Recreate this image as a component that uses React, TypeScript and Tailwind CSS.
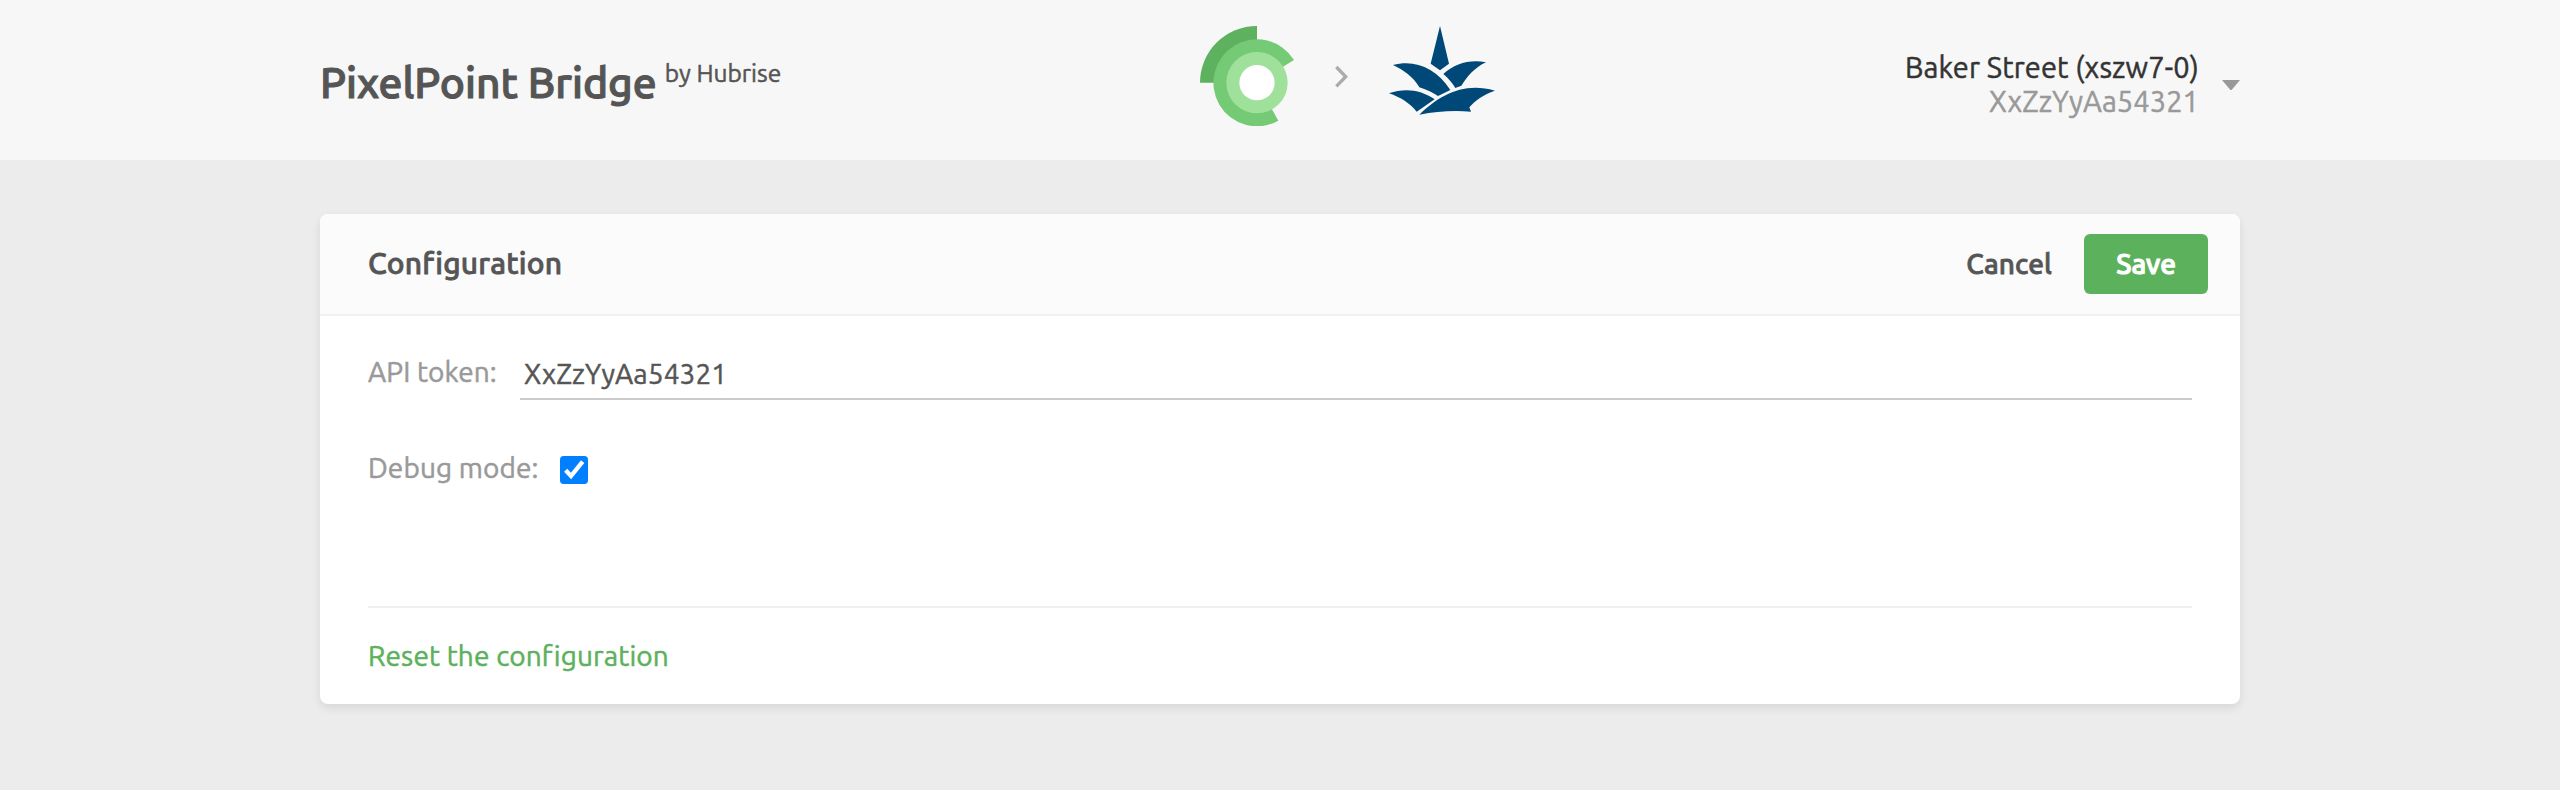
function HubLogo() {
  return (
    <svg className="h-[100px] w-[94px]" viewBox="60 48 282 300" aria-hidden="true">
      <path d="M231 218H60A171 170 0 0 1 231 48Z" fill="#5eb15e" />
      <path d="M231 218L295 332A130.5 130.5 0 1 1 342 150Z" fill="#75ca75" />
      <circle cx="231" cy="218" r="92" fill="#9fe19b" />
      <circle cx="231" cy="218" r="53" fill="#fff" />
    </svg>
  );
}

function PineappleLogo() {
  return (
    <svg className="h-[91px] w-[108px]" viewBox="624 45 324 273" fill="#004877" aria-hidden="true">
      <path d="M780 48L807 161L780 181L752 161Z" />
      <path d="M639 165C703 148 768 172 811 240L774 258C758 248 742 240 718 232C700 200 670 180 639 165Z" />
      <path d="M790 192C825 160 870 148 918 157C880 175 862 200 844 227L826 234C817 219 805 205 790 192Z" />
      <path d="M627 250C675 232 725 240 764 268L710 305C690 280 662 262 627 250Z" />
      <path d="M718 314C780 255 850 215 945 242C910 253 885 272 868 292L873 305C820 301 770 304 718 314Z" />
    </svg>
  );
}

function Header() {
  return (
    <header className="h-40 bg-[#f7f7f7]">
      <div className="mx-auto flex h-full w-[1920px] items-start">
        <div className="flex w-[880px] items-start gap-[8px] pt-[58px] whitespace-nowrap">
          <h1 className="text-[42.6px] leading-[48px] font-medium tracking-[-0.04px] [-webkit-text-stroke:1.1px_currentColor]">PixelPoint Bridge</h1>
          <span className="mt-px text-[24.5px] leading-[28px]">by Hubrise</span>
        </div>
        <div className="flex items-start pt-[26px]">
          <HubLogo />
          <svg className="mt-[38px] ml-10 h-[25px] w-[15px]" viewBox="462 162 45 75" fill="none" aria-hidden="true">
            <path d="M469 171L497 200L469 229" stroke="#ababab" strokeWidth="10" />
          </svg>
          <div className="-mt-px ml-[39px]">
            <PineappleLogo />
          </div>
        </div>
        <div className="ml-auto flex items-start pt-[50px] whitespace-nowrap">
          <div className="text-right text-[29px] leading-[34px]">
            <div className="tracking-[0.13px] text-[#333]">Baker Street (xszw7-0)</div>
            <div className="tracking-[0.07px] text-[#999]">XxZzYyAa54321</div>
          </div>
          <svg className="mt-[30px] ml-[23px] h-[10px] w-[18px]" viewBox="0 0 18 10" aria-hidden="true">
            <path d="M0 0H18L10 9.4Q9 10.4 8 9.4Z" fill="#999" />
          </svg>
        </div>
      </div>
    </header>
  );
}

export default function App() {
  return (
    <div className="h-[790px] w-[2560px] bg-[#ececec] font-['Ubuntu','Noto_Sans',sans-serif] text-[28px] leading-8 text-[#555] [-webkit-text-stroke:0.5px_currentColor]">
      <Header />
      <main className="mx-auto mt-[54px] h-[490px] w-[1920px] overflow-hidden rounded-lg bg-white shadow-[0_4px_10px_rgba(0,0,0,0.09)]">
        <div className="flex h-[102px] items-center border-b-2 border-[#f0f0f0] bg-[#fbfbfb] pr-8 pl-12">
          <h2 className="pb-0.5 text-[30px] leading-[34px] font-medium tracking-[0.22px] [-webkit-text-stroke:0.8px_currentColor]">Configuration</h2>
          <button className="ml-auto font-medium tracking-[0.1px] [-webkit-text-stroke:0.8px_currentColor]">Cancel</button>
          <button className="ml-8 h-[60px] w-[124px] rounded-md bg-[#5cb15c] font-medium text-white [-webkit-text-stroke:1.1px_currentColor]">Save</button>
        </div>
        <div className="px-12">
          <div className="flex h-[84px] items-end">
            <label className="h-[44px] w-[152px] tracking-[0.1px] whitespace-nowrap text-[#999]">API token:</label>
            <div className="h-[44px] flex-1 border-b-2 border-[#ccc] pt-[2px] pl-1 tracking-[0.1px]">XxZzYyAa54321</div>
          </div>
          <div className="mt-[52px] flex items-start">
            <label className="w-[192px] tracking-[0.1px] whitespace-nowrap text-[#999]">Debug mode:</label>
            <svg className="mt-1 h-7 w-7" viewBox="0 0 84 84" role="checkbox" aria-checked="true">
              <rect width="84" height="84" rx="11" fill="#007fff" />
              <path d="M17 43L33 60L68 17" fill="none" stroke="#fff" strokeWidth="13" />
            </svg>
          </div>
          <div className="mt-[122px] border-t-2 border-[#f0f0f0] pt-[32px] tracking-[0.14px] text-[#5cb15c]">
            Reset the configuration
          </div>
        </div>
      </main>
    </div>
  );
}
